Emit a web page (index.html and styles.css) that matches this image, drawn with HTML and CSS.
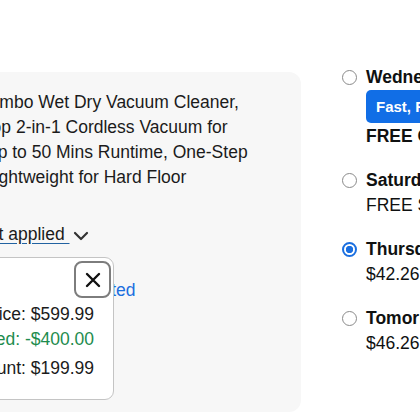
FILE: index.html
```html
<!DOCTYPE html>
<html lang="en">
<head>
<meta charset="utf-8">
<title>Delivery options</title>
<link rel="stylesheet" href="styles.css">
</head>
<body>
<div class="page">
  <section class="panel">
    <p class="title">
      <span class="ln">Combo Wet Dry Vacuum Cleaner,</span>
      <span class="ln">Mop 2-in-1 Cordless Vacuum for</span>
      <span class="ln ln-in">Up to 50 Mins Runtime, One-Step</span>
      <span class="ln ln-in">Lightweight for Hard Floor</span>
    </p>
    <div class="discount">
      <a class="discount-link" href="#">not applied </a>
      <svg class="chev" width="16" height="10" viewBox="0 0 16 10"><path d="M2 2 L8 8 L14 2" fill="none" stroke="#333" stroke-width="2.2" stroke-linecap="round" stroke-linejoin="round"/></svg>
    </div>
    <a class="promo-link" href="#">Promotions selected</a>
    <div class="popover">
      <button class="close" aria-label="Close">
        <svg width="18" height="18" viewBox="0 0 18 18"><path d="M3 3 L15 15 M15 3 L3 15" stroke="#111" stroke-width="2.4" stroke-linecap="round"/></svg>
      </button>
      <div class="row">List Price: $599.99</div>
      <div class="row saved">You Saved: -$400.00</div>
      <div class="row total">Total after discount: $199.99</div>
    </div>
  </section>
  <section class="options">
    <div class="option">
      <span class="radio"></span>
      <div class="opt-text">
        <div class="bold">Wednesday, March 5</div>
        <span class="badge">Fast, FREE Delivery</span>
        <div class="bold">FREE One-Day Delivery</div>
      </div>
    </div>
    <div class="option">
      <span class="radio"></span>
      <div class="opt-text">
        <div class="bold">Saturday, March 8</div>
        <div>FREE Standard Delivery</div>
      </div>
    </div>
    <div class="option">
      <span class="radio checked"></span>
      <div class="opt-text">
        <div class="bold">Thursday, March 6</div>
        <div>$42.26 - Two-Day Delivery</div>
      </div>
    </div>
    <div class="option last">
      <span class="radio"></span>
      <div class="opt-text">
        <div class="bold">Tomorrow, March 4</div>
        <div>$46.26 - One-Day Delivery</div>
      </div>
    </div>
  </section>
</div>
</body>
</html>
```
FILE: styles.css
```css
html, body {
  margin: 0;
  padding: 0;
  width: 420px;
  height: 420px;
  overflow: hidden;
  background: #ffffff;
}
body {
  font-family: "Liberation Sans", Arial, sans-serif;
  font-size: 17.5px;
  line-height: 25px;
  color: #0f1111;
}
.page {
  display: flex;
  align-items: flex-start;
  padding-top: 65px;
  white-space: nowrap;
}
.panel {
  flex: none;
  position: relative;
  box-sizing: border-box;
  width: 501px;
  height: 340px;
  margin-left: -200px;
  margin-top: 7px;
  padding: 18px 0 0 177px;
  background: #f7f7f7;
  border-radius: 12px;
}
.title {
  margin: 0;
  color: #1b1b1b;
}
.ln {
  display: block;
}
.ln-in {
  margin-left: 8px;
}
.discount {
  margin-top: 32px;
  margin-left: 2px;
  display: flex;
  align-items: center;
}
.discount-link {
  color: #1b1b1b;
  text-decoration: underline;
  text-decoration-color: #2162a1;
  text-underline-offset: 3px;
  white-space: pre;
}
.chev {
  margin-left: 3px;
  margin-top: 2px;
}
.promo-link {
  display: block;
  margin-top: 31px;
  color: #1b6fdf;
  text-decoration: none;
}
.popover {
  position: absolute;
  top: 185px;
  left: -60px;
  width: 374px;
  height: 143px;
  box-sizing: border-box;
  padding: 44px 19px 0 0;
  background: #ffffff;
  border: 1px solid #c4c4c4;
  border-radius: 9px;
  text-align: right;
  color: #1b1b1b;
}
.close {
  position: absolute;
  top: 3px;
  right: 2px;
  width: 37px;
  height: 37px;
  box-sizing: border-box;
  padding: 0;
  border: 2px solid #7d7d7d;
  border-radius: 8px;
  background: #ffffff;
  display: flex;
  align-items: center;
  justify-content: center;
}
.row {
  line-height: 25px;
}
.saved {
  color: #1e8c4e;
}
.total {
  margin-top: 4px;
}
.options {
  flex: none;
  margin-left: 42px;
}
.option {
  display: flex;
  align-items: flex-start;
  gap: 9px;
  margin-bottom: 19px;
}
.option.last {
  margin-bottom: 0;
}
.radio {
  flex: none;
  width: 15px;
  height: 15px;
  margin-top: 5px;
  margin-left: -1px;
  box-sizing: border-box;
  border: 1px solid #8a8a8a;
  border-radius: 50%;
  background: #ffffff;
}
.radio.checked {
  border: 2px solid #1a6fe0;
  background: radial-gradient(circle, #1a6fe0 0 3.4px, #ffffff 4px);
}
.bold {
  font-weight: 700;
}
.badge {
  display: inline-block;
  height: 33px;
  line-height: 33px;
  padding: 0 10px;
  margin-bottom: 1px;
  background: #116ee6;
  color: #ffffff;
  font-weight: 700;
  font-size: 15px;
  border-radius: 5px;
  vertical-align: top;
}
```
